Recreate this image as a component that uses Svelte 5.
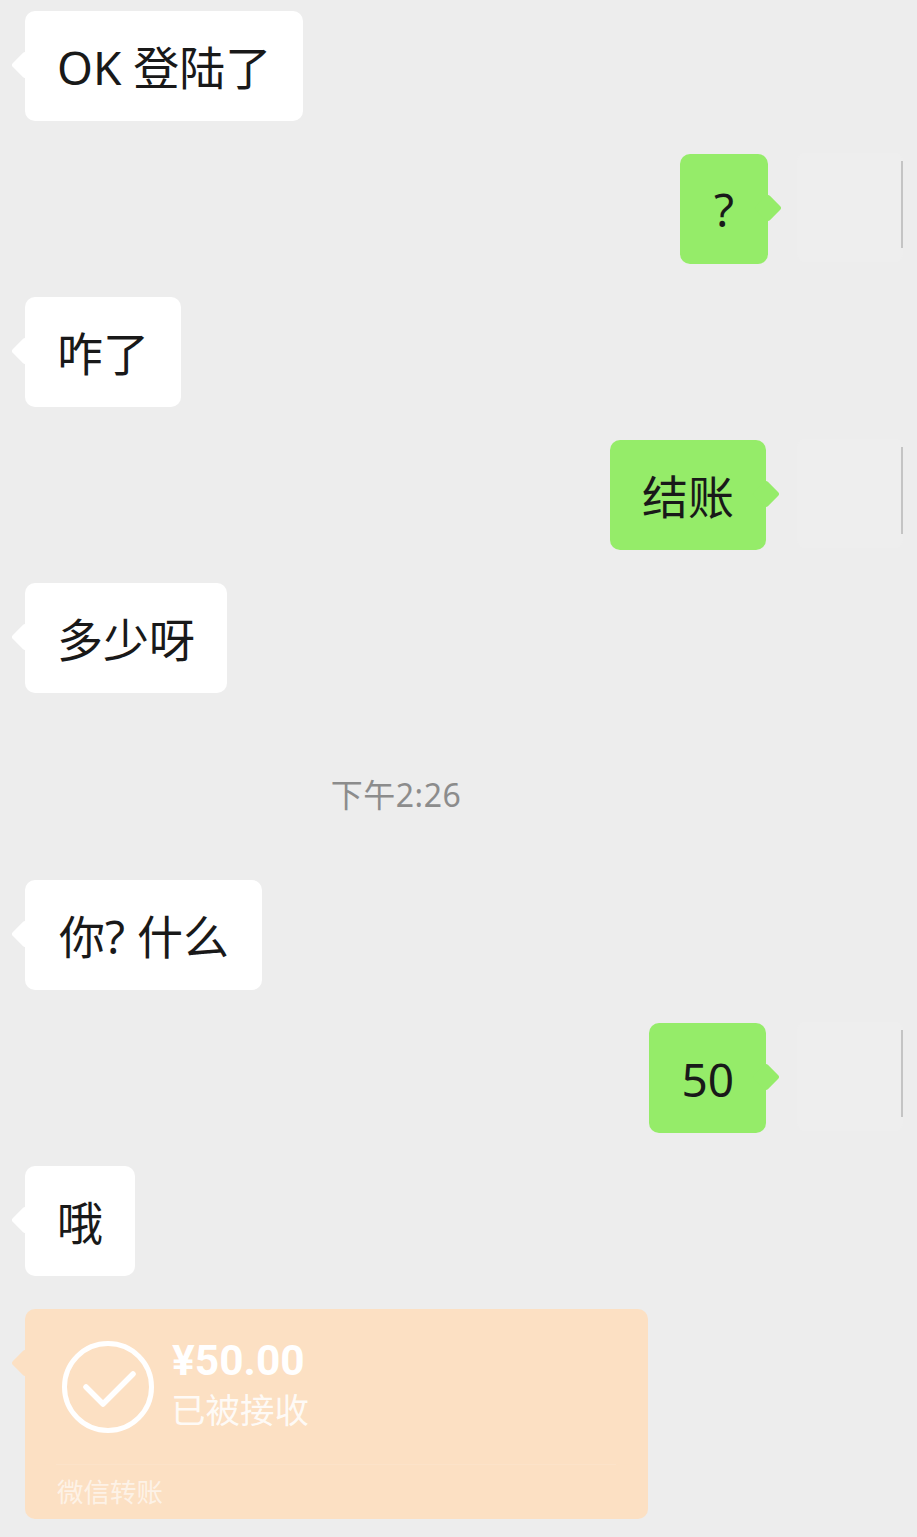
<script>
	const messages = [
		{ side: "left", text: "OK 登陆了" },
		{ side: "right", text: "?", shift: true },
		{ side: "left", text: "咋了" },
		{ side: "right", text: "结账" },
		{ side: "left", text: "多少呀" },
		{ side: "time", text: "下午2:26" },
		{ side: "left", text: "你? 什么", wide: true },
		{ side: "right", text: "50" },
		{ side: "left", text: "哦" }
	];
</script>

<main class="chat">
	{#each messages as msg}
		{#if msg.side === "time"}
			<div class="time">{msg.text}</div>
		{:else if msg.side === "left"}
			<div class="row">
				<div class="bubble white" class:wide={msg.wide}>{msg.text}</div>
			</div>
		{:else}
			<div class="row mine">
				<div class="bubble green" class:shift={msg.shift}>{msg.text}</div>
				<div class="avatar"><span class="edge"></span></div>
			</div>
		{/if}
	{/each}

	<div class="row">
		<div class="transfer">
			<div class="transfer-main">
				<svg class="check" width="92" height="92" viewBox="0 0 92 92" fill="none" stroke="#fff">
					<circle cx="46" cy="46" r="43.5" stroke-width="5" />
					<path d="M24 46 L41 63 L71 33" stroke-width="5.500" stroke-linecap="round" stroke-linejoin="round" />
				</svg>
				<div class="transfer-text">
					<div class="amount">¥50.00</div>
					<div class="status">已被接收</div>
				</div>
			</div>
			<div class="transfer-foot">微信转账</div>
		</div>
	</div>
</main>

<style>
	:global(body) {
		background: #ededed;
	}

	.chat {
		display: flex;
		flex-direction: column;
		gap: 33px;
		height: 1537px;
		box-sizing: border-box;
		padding: 11px 14px 0 25px;
		overflow: hidden;
		background: #ededed;
		font-family: "Noto Sans", "Noto Sans CJK SC", sans-serif;
		color: #191919;
	}

	.row {
		display: flex;
		align-items: flex-start;
	}

	.mine {
		justify-content: flex-end;
	}

	.bubble {
		position: relative;
		box-sizing: border-box;
		height: 110px;
		padding: 33px 32px 0;
		border-radius: 10px;
		font-size: 46px;
		line-height: 46px;
		white-space: nowrap;
	}

	.bubble::before {
		content: "";
		position: absolute;
		top: 44px;
		width: 20px;
		height: 20px;
		border-radius: 3px;
		background: inherit;
		transform: rotate(45deg);
	}

	.white {
		background: #fff;
	}

	.wide {
		padding-left: 34px;
		padding-right: 33px;
	}

	.white::before,
	.transfer::before {
		left: -10px;
	}

	.green {
		background: #95ec69;
	}

	.green::before {
		right: -10px;
	}

	.shift {
		margin-right: -2px;
		padding: 32px 34px 0;
	}

	.avatar {
		display: flex;
		justify-content: flex-end;
		box-sizing: border-box;
		width: 106px;
		height: 109px;
		margin-left: 31px;
		margin-top: -1px;
		padding-top: 8px;
		border-radius: 8px;
		background: #eee;
	}

	.edge {
		width: 2px;
		height: 87px;
		background: #c4c4c4;
	}

	.time {
		box-sizing: border-box;
		height: 121px;
		padding: 52px 136px 0 0;
		text-align: center;
		font-size: 32px;
		line-height: 34px;
		letter-spacing: 0.5px;
		color: #8c8c8c;
	}

	.transfer {
		position: relative;
		box-sizing: border-box;
		width: 623px;
		height: 210px;
		border-radius: 10px;
		background: #fce0c3;
		color: #fff;
	}

	.transfer::before {
		content: "";
		position: absolute;
		top: 44px;
		width: 20px;
		height: 20px;
		border-radius: 3px;
		background: inherit;
		transform: rotate(45deg);
	}

	.transfer-main {
		display: flex;
		align-items: flex-start;
		gap: 18px;
		height: 156px;
		box-sizing: border-box;
		margin: 0 32px 0 31px;
		padding: 32px 0 0 6px;
		border-bottom: 1px solid #fce3c9;
	}

	.check {
		flex: none;
	}

	.amount {
		margin-top: -6px;
		font-family: Roboto, sans-serif;
		font-size: 42.500px;
		line-height: 52px;
		font-weight: 700;
	}

	.status {
		font-size: 34.500px;
		line-height: 44px;
		margin-top: 1px;
		margin-left: -1px;
		opacity: 0.85;
	}

	.transfer-foot {
		padding: 9px 0 0 32px;
		font-size: 26.500px;
		line-height: 36px;
		opacity: 0.6;
	}
</style>
